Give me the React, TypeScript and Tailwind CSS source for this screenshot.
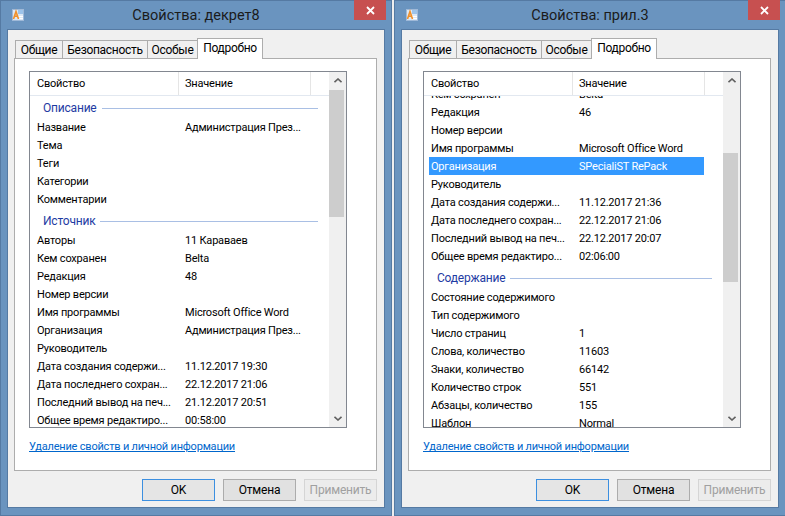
import React from 'react';

type Row = { g: string } | { n: string; v?: string; sel?: boolean };

const FONT = { fontFamily: 'Roboto, "Liberation Sans", sans-serif' };

const leftRows: Row[] = [
  { g: 'Описание' },
  { n: 'Название', v: 'Администрация През...' },
  { n: 'Тема' },
  { n: 'Теги' },
  { n: 'Категории' },
  { n: 'Комментарии' },
  { g: 'Источник' },
  { n: 'Авторы', v: '11 Караваев' },
  { n: 'Кем сохранен', v: 'Belta' },
  { n: 'Редакция', v: '48' },
  { n: 'Номер версии' },
  { n: 'Имя программы', v: 'Microsoft Office Word' },
  { n: 'Организация', v: 'Администрация През...' },
  { n: 'Руководитель' },
  { n: 'Дата создания содержи...', v: '11.12.2017 19:30' },
  { n: 'Дата последнего сохран...', v: '22.12.2017 21:06' },
  { n: 'Последний вывод на печ...', v: '21.12.2017 20:51' },
  { n: 'Общее время редактиро...', v: '00:58:00' },
];

const rightRows: Row[] = [
  { n: 'Кем сохранен', v: 'Belta' },
  { n: 'Редакция', v: '46' },
  { n: 'Номер версии' },
  { n: 'Имя программы', v: 'Microsoft Office Word' },
  { n: 'Организация', v: 'SPecialiST RePack', sel: true },
  { n: 'Руководитель' },
  { n: 'Дата создания содержи...', v: '11.12.2017 21:36' },
  { n: 'Дата последнего сохран...', v: '22.12.2017 21:06' },
  { n: 'Последний вывод на печ...', v: '22.12.2017 20:07' },
  { n: 'Общее время редактиро...', v: '02:06:00' },
  { g: 'Содержание' },
  { n: 'Состояние содержимого' },
  { n: 'Тип содержимого' },
  { n: 'Число страниц', v: '1' },
  { n: 'Слова, количество', v: '11603' },
  { n: 'Знаки, количество', v: '66142' },
  { n: 'Количество строк', v: '551' },
  { n: 'Абзацы, количество', v: '155' },
  { n: 'Шаблон', v: 'Normal' },
];

const DocIcon = () => (
  <svg width="12" height="12" viewBox="0 0 12 12">
    <rect x="0.5" y="0.5" width="11" height="11" fill="#dce8f5" stroke="#9fb9d8" />
    <rect x="6" y="1" width="5" height="4" fill="#9cc3ea" />
    <rect x="6" y="7" width="5" height="1" fill="#ffffff" />
    <rect x="6" y="9" width="5" height="1" fill="#ffffff" />
    <path d="M1.5 10 L4 2.5 L6.5 10 M2.6 7.3 H5.4" stroke="#f0902a" strokeWidth="1.6" fill="none" />
  </svg>
);

const Chevron = ({ down }: { down?: boolean }) => (
  <svg width="8" height="5" viewBox="0 0 8 5">
    <polyline
      points={down ? '0.5,0.8 4,4 7.5,0.8' : '0.5,4.2 4,1 7.5,4.2'}
      fill="none"
      stroke="#606060"
      strokeWidth="1.6"
    />
  </svg>
);

function ListRow({ row }: { row: Row }) {
  if ('g' in row) {
    return (
      <div className="h-[23px] flex items-center pt-[3px] pl-[13px] pr-[11px]">
        <span className="text-[12px] text-[#1e3ba3] whitespace-nowrap">{row.g}</span>
        <div className="flex-1 h-px bg-[#a9bfe4] ml-[5px]" />
      </div>
    );
  }
  return (
    <div
      className={`h-[18px] ml-[5px] w-[275px] flex items-center pt-[2px] text-[11px] tracking-[-0.2px] ${
        row.sel ? 'bg-[#3399ff] text-white' : 'text-[#000000]'
      }`}
    >
      <div className="w-[143px] pl-[2px] overflow-hidden whitespace-nowrap">{row.n}</div>
      <div className="flex-1 pl-[7px] overflow-hidden whitespace-nowrap">{row.v}</div>
    </div>
  );
}

function Dialog({
  title,
  rows,
  offset,
  thumbTop,
  thumbHeight,
}: {
  title: string;
  rows: Row[];
  offset: string;
  thumbTop: number;
  thumbHeight: number;
}) {
  const tabs = [
    { t: 'Общие', w: 'w-[48px]' },
    { t: 'Безопасность', w: 'w-[86px]' },
    { t: 'Особые', w: 'w-[51px]' },
  ];
  return (
    <div className="w-[392px] h-[516px] shrink-0 bg-[#6a94bf] border border-[#557aa3] flex flex-col px-[6px] pb-[7px]" style={FONT}>
      {/* title bar */}
      <div className="h-[28px] -mx-[6px] grid grid-cols-[1fr_auto_1fr]">
        <div className="pl-[11px] pt-[8px]">
          <DocIcon />
        </div>
        <div className="flex items-center pt-[1px] text-[14.5px] text-[#1b1b1b] whitespace-nowrap">{title}</div>
        <div className="flex justify-end pr-[5px]">
          <div className="w-[32px] h-[20px] -mt-[1px] bg-[#c75050] flex items-center justify-center">
            <svg width="9" height="9" viewBox="0 0 9 9">
              <path d="M1 1 L8 8 M8 1 L1 8" stroke="#ffffff" strokeWidth="1.8" />
            </svg>
          </div>
        </div>
      </div>

      {/* client area */}
      <div className="flex-1 border border-[#557aa3] bg-[#f0f0f0] flex flex-col pl-[6px] pr-[7px] pt-[8px] text-[11px] tracking-[-0.2px]">
        {/* tabs */}
        <div className="h-[21px] flex items-end pl-[1px] text-[12px] tracking-[-0.3px] text-[#000]">
          {tabs.map((tab, i) => (
            <div
              key={tab.t}
              className={`${tab.w} h-[19px] ${i > 0 ? '-ml-px' : ''} border border-b-0 border-[#adadad] bg-[#f0f0f0] flex items-center justify-center pb-[1px]`}
            >
              {tab.t}
            </div>
          ))}
          <div className="relative z-10 w-[66px] h-[21px] -ml-px border border-b-0 border-[#adadad] bg-white flex items-center justify-center pb-[2px]">
            Подробно
          </div>
        </div>

        {/* tab panel */}
        <div className="h-[413px] -mt-px border border-[#adadad] bg-white pl-[14px] pt-[12px]">
          <div className="w-[318px] h-[357px] border border-[#828790] flex">
            <div className="w-[299px] flex flex-col">
              <div className="relative z-10 h-[24px] shrink-0 bg-white border-b border-[#e2e8f0] flex text-[#000]">
                <div className="w-[149px] border-r border-[#e5e5e5] pl-[7px] pt-[2px] flex items-center">Свойство</div>
                <div className="w-[132px] border-r border-[#e5e5e5] pl-[6px] pt-[2px] flex items-center">Значение</div>
              </div>
              <div className="flex-1 overflow-hidden">
                <div className={offset}>
                  {rows.map((r, i) => (
                    <ListRow key={i} row={r} />
                  ))}
                </div>
              </div>
            </div>
            {/* scrollbar */}
            <div className="w-[17px] bg-[#f0f0f0] flex flex-col">
              <div className="h-[17px] shrink-0 flex items-center justify-center">
                <Chevron />
              </div>
              <div className="flex-1 relative">
                <div
                  className="absolute left-0 w-[15px] bg-[#cdcdcd]"
                  style={{ top: thumbTop, height: thumbHeight }}
                />
              </div>
              <div className="h-[17px] shrink-0 flex items-center justify-center">
                <Chevron down />
              </div>
            </div>
          </div>
          <div className="mt-[11px] h-[16px] flex items-center pt-[1px] text-[#0066cc] underline whitespace-nowrap">
            Удаление свойств и личной информации
          </div>
        </div>

        {/* buttons */}
        <div className="mt-[8px] flex justify-end gap-[8px] text-[12px] tracking-[-0.2px]">
          <div className="w-[73px] h-[22px] border border-[#3c8fe0] bg-[#e5e5e5] flex items-center justify-center text-[#000]">
            OK
          </div>
          <div className="w-[73px] h-[22px] border border-[#acacac] bg-[#e1e1e1] flex items-center justify-center text-[#000]">
            Отмена
          </div>
          <div className="w-[73px] h-[22px] border border-[#d5d5d5] bg-[#ececec] flex items-center justify-center text-[#a0a0a0]">
            Применить
          </div>
        </div>
      </div>
    </div>
  );
}

export default function App() {
  return (
    <div className="w-[785px] h-[516px] overflow-hidden bg-[#eeeeee] flex gap-[2px]">
      <Dialog title="Свойства: декрет8" rows={leftRows} offset="-mt-px" thumbTop={1} thumbHeight={127} />
      <Dialog title="Свойства: прил.3" rows={rightRows} offset="-mt-[11px]" thumbTop={64} thumbHeight={129} />
    </div>
  );
}
